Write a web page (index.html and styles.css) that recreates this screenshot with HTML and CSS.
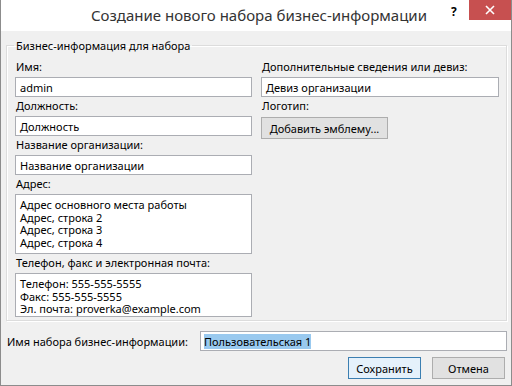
FILE: index.html
```html
<!DOCTYPE html>
<html lang="ru">
<head>
    <meta charset="UTF-8">
    <title>Создание нового набора бизнес-информации</title>
    <link rel="stylesheet" href="styles.css">
</head>
<body>
    <div class="window">
        <div class="titlebar">
            <div class="title">Создание нового набора бизнес-информации</div>
            <div class="help">?</div>
            <div class="close">
                <svg width="10" height="10" viewBox="0 0 10 10"><path d="M1 1L9 9M9 1L1 9" stroke="#fff" stroke-width="1.6"/></svg>
            </div>
        </div>
        <div class="content">
            <fieldset class="group">
                <legend>Бизнес-информация для набора</legend>
                <div class="columns">
                    <div class="column">
                        <label>Имя:</label>
                        <div class="field">admin</div>
                        <label>Должность:</label>
                        <div class="field">Должность</div>
                        <label>Название организации:</label>
                        <div class="field">Название организации</div>
                        <label>Адрес:</label>
                        <div class="field area address">Адрес основного места работы<br>Адрес, строка 2<br>Адрес, строка 3<br>Адрес, строка 4</div>
                        <label>Телефон, факс и электронная почта:</label>
                        <div class="field area phone">Телефон: 555-555-5555<br>Факс: 555-555-5555<br>Эл. почта: proverka@example.com</div>
                    </div>
                    <div class="column">
                        <label>Дополнительные сведения или девиз:</label>
                        <div class="field">Девиз организации</div>
                        <label>Логотип:</label>
                        <div><button class="btn logo">Добавить эмблему...</button></div>
                    </div>
                </div>
            </fieldset>
            <div class="name-row">
                <span class="name-label">Имя набора бизнес-информации:</span>
                <div class="field name"><span class="selected">Пользовательская 1</span></div>
            </div>
            <div class="actions">
                <button class="btn default">Сохранить</button>
                <button class="btn">Отмена</button>
            </div>
        </div>
    </div>
</body>
</html>
```

FILE: styles.css
```css
body {
    margin: 0;
    font-family: "Noto Sans", sans-serif;
    font-size: 11px;
    color: #000;
}
.window {
    width: 512px;
    height: 386px;
    box-sizing: border-box;
    border: 1px solid #8c8c8c;
    border-top: none;
    background: #f0f0f0;
    display: flex;
    flex-direction: column;
    overflow: hidden;
}
.titlebar {
    height: 31px;
    background: #fff;
    position: relative;
    flex-shrink: 0;
}
.title {
    text-align: center;
    font-size: 15px;
    color: #333;
    line-height: 31px;
    padding-left: 6px;
}
.help {
    position: absolute;
    left: 450px;
    top: 3px;
    font-weight: bold;
    font-size: 12px;
}
.close {
    position: absolute;
    right: 0;
    top: 0;
    width: 42px;
    height: 20px;
    background: #c75050;
    display: flex;
    align-items: center;
    justify-content: center;
}
.content {
    padding: 7px 5px 0 5px;
    display: flex;
    flex-direction: column;
}
.group {
    margin: 0;
    border: 1px solid #dcdcdc;
    box-shadow: inset 1px 1px 0 #fff, 1px 1px 0 #fff;
    padding: 5px 7px 4px 8px;
    height: 283px;
    box-sizing: border-box;
}
.group legend {
    padding: 0 2px;
    margin-left: -1px;
}
.columns {
    display: flex;
    gap: 9px;
}
.column {
    width: 237px;
    display: flex;
    flex-direction: column;
}
.column:last-child {
    width: 238px;
}
.column label {
    display: block;
    height: 19px;
    line-height: 18px;
    padding-left: 1px;
    white-space: nowrap;
}
.field {
    height: 20px;
    box-sizing: border-box;
    border: 1px solid #abadb3;
    background: #fff;
    padding: 0 4px;
    line-height: 19px;
    white-space: nowrap;
}
.area {
    padding: 4px 4px;
    line-height: 12.5px;
}
.address {
    height: 60px;
}
.phone {
    height: 44px;
}
.btn {
    font-family: "Noto Sans", sans-serif;
    font-size: 11px;
    background: #e1e1e1;
    border: 1px solid #adadad;
    height: 22px;
    padding: 0 6px;
    color: #000;
    white-space: nowrap;
}
.logo {
    margin-top: 1px;
    width: 127px;
}
.name-row {
    display: flex;
    align-items: center;
    margin-top: 10px;
    padding-left: 1px;
}
.name-label {
    width: 193px;
    white-space: nowrap;
}
.name {
    flex: 1;
    padding-left: 3px;
    margin-right: -1px;
}
.selected {
    background: #99c9ef;
}
.actions {
    display: flex;
    justify-content: flex-end;
    gap: 11px;
    margin-top: 6px;
    padding-right: 1px;
}
.actions .btn {
    width: 73px;
}
.actions .default {
    border-color: #3c7fb1;
    background: #e5f1fb;
}
```
